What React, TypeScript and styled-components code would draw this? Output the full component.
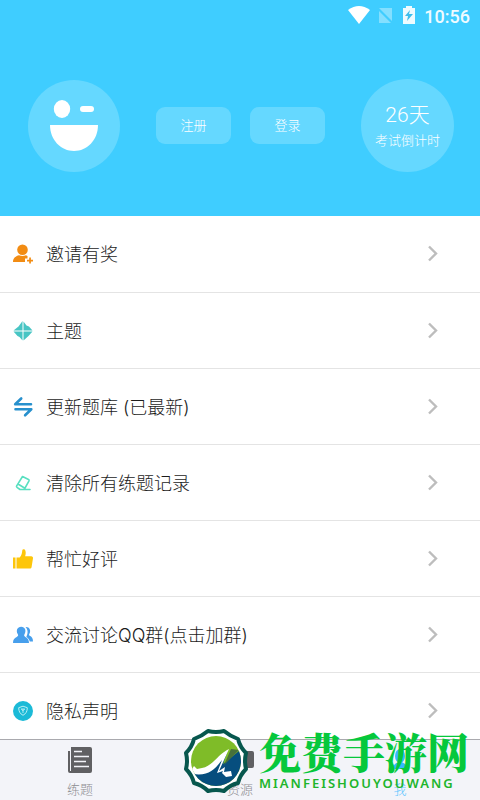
import React from "react";
import styled, { createGlobalStyle } from "styled-components";

const GlobalStyle = createGlobalStyle`
  *, *::before, *::after { box-sizing: border-box; }
  body {
    margin: 0;
    background: #fff;
    font-family: Roboto, "Noto Sans CJK SC", sans-serif;
  }
  button { font: inherit; border: 0; padding: 0; cursor: pointer; }
`;

const Page = styled.div`
  position: relative;
  display: flex;
  flex-direction: column;
  height: 100vh;
  overflow: hidden;
`;

const Header = styled.header`
  flex: none;
  background: #3fcdff;
  color: #fff;
  padding-bottom: 44px;
`;

const StatusBar = styled.div`
  display: flex;
  align-items: center;
  justify-content: flex-end;
  height: 32px;
  padding-right: 10px;
  font-size: 18px;
  font-weight: 500;
  color: #effbff;
`;

const StatusIcons = styled.div`
  display: flex;
  align-items: center;
  gap: 6px;
  margin-right: 6px;
  margin-bottom: 2px;
`;

const Profile = styled.div`
  display: flex;
  align-items: center;
  justify-content: space-between;
  padding: 47px 26px 0 28px;
`;

const Avatar = styled.button`
  width: 92px;
  height: 92px;
  && { border-radius: 50%; }
  background: #65d8ff;
`;

const Actions = styled.div`
  display: flex;
  gap: 19px;
`;

const PillButton = styled.button`
  && {
    width: 75px;
    height: 37px;
    border-radius: 9px;
    background: #65d8ff;
    color: #fff;
    font-size: 13px;
    line-height: 16px;
    font-weight: 300;
  }
`;

const Countdown = styled.div`
  display: flex;
  flex-direction: column;
  align-items: center;
  justify-content: center;
  width: 93px;
  height: 93px;
  padding-top: 2px;
  border-radius: 50%;
  background: #65d8ff;
  font-weight: 300;
`;

const Days = styled.strong`
  font-size: 21px;
  line-height: 28px;
  font-weight: 300;
`;

const Caption = styled.span`
  font-size: 13px;
  line-height: 24px;
`;

const Menu = styled.main`
  flex: 1;
  min-height: 0;
  overflow: hidden;
`;

const MenuRow = styled.button`
  display: flex;
  align-items: center;
  width: 100%;
  height: 76px;
  background: #fff;
  color: #1c1c1c;
  text-align: left;
  & + & { border-top: 1px solid #e4e4e4; }
  && { padding: 0 41px 0 12px; }
`;

const MenuLabel = styled.span`
  flex: 1;
  margin-left: 12px;
  padding-top: 2px;
  font-family: Inter, "Noto Sans CJK SC", sans-serif;
  font-size: 18px;
  line-height: 26px;
  font-weight: 300;
`;

const TabBar = styled.nav`
  flex: none;
  display: grid;
  grid-template-columns: repeat(3, 1fr);
  height: 61px;
  background: #f3f4f9;
  border-top: 1px solid #a9a9ae;
`;

const Tab = styled.button<{ $active?: boolean }>`
  display: flex;
  flex-direction: column;
  align-items: center;
  gap: 6px;
  && { padding-top: 6px; }
  background: transparent;
  color: ${(p) => (p.$active ? "#5cc4ff" : "#8e8e92")};
`;

const TabLabel = styled.span`
  font-size: 13px;
  line-height: 20px;
  font-weight: 300;
`;

const Watermark = styled.div`
  position: absolute;
  right: 11px;
  bottom: 6px;
  display: flex;
  align-items: center;
  gap: 10px;
  pointer-events: none;
`;

const Wordmark = styled.div`
  display: flex;
  flex-direction: column;
`;

const BrandName = styled.span`
  color: #06c83c;
  font-family: "Noto Serif CJK SC", "Noto Sans CJK SC", serif;
  font-size: 42px;
  line-height: 44px;
  font-weight: 900;
  white-space: nowrap;
`;

const BrandLatin = styled.span`
  color: #20b52c;
  font-family: "Noto Sans", sans-serif;
  font-size: 13px;
  line-height: 20px;
  font-weight: 600;
  letter-spacing: 2px;
`;

const InviteIcon = () => (
  <svg width="22" height="22" viewBox="0 0 22 22" fill="#f28c13">
    <circle cx="10.5" cy="6.8" r="5.3" />
    <path d="M1 19c0-4 3-6 6-6.700 2.300 1 4.800 1 7 0l1.500.7v2.500H13V19z" />
    <path d="M17.200 14.500h1.700v2.200H21v1.700h-2.100v2.200h-1.700v-2.200h-2.200v-1.700h2.200z" />
  </svg>
);

const ThemeIcon = () => (
  <svg width="22" height="22" viewBox="0 0 22 22" fill="#48c5c4">
    <path d="M10.500 1v9.500H1.500L6.500 6.500zM11.500 1.500l3 4 2.500 1 3.500 4h-9zM1.500 11.500h9v9l-3-3.500-2-1zM20.500 11.500h-9v9l5-4.500z" />
  </svg>
);

const UpdateIcon = () => (
  <svg width="22" height="22" viewBox="0 0 22 22" fill="none" stroke="#2790cd" strokeWidth="2.600" strokeLinecap="round" strokeLinejoin="round">
    <path d="M9.200 2.500 3.200 8.300H19M3.500 13.300h15.800l-6.200 6" />
  </svg>
);

const EraserIcon = () => (
  <svg width="22" height="22" viewBox="0 0 22 22" fill="none" stroke="#58dfc0" strokeWidth="1.600" strokeLinejoin="round" strokeLinecap="round">
    <path d="m10.500 4.500 6 3c.6.300.8.800.5 1.400l-4.800 8.600H8l-3-2.200c-.6-.4-.7-.9-.3-1.500zM6 12l6.500 4M8 17.500h10" />
  </svg>
);

const ThumbIcon = () => (
  <svg width="22" height="22" viewBox="0 0 22 22" fill="#fdc60b">
    <path d="M1 9.500h2.500v11H1zM4.500 9.500h3.200C9.800 7.500 10 5 10.300 2.300c.2-1.500 2.500-1.300 3.100.4.600 1.800.3 3.800-.3 5.500h6.200c1.200 0 1.900 1 1.700 2.100L19.600 19c-.2 1-.8 1.500-1.800 1.500H4.500z" />
  </svg>
);

const GroupIcon = () => (
  <svg width="22" height="22" viewBox="0 0 22 22" fill="#479fec">
    <path d="M13.500 3c3.800-.5 5.800 3.300 4 6.500-.5 1-.8 1.800.2 2.300 2 .9 3.300 2.400 3.300 5.700h-3.200c-.6-2.400-2-3.600-3.500-4.600 1.800-3.500 1.900-7-.8-9.900z" />
    <path d="M9.200 2.700c3.900 0 5.300 3.800 3.400 7.300-.8 1.500-.5 2.200.8 2.900 2.300 1.100 3.600 2.800 3.600 6.100H1c0-3.400 1.200-5 3.700-6.100 1.400-.7 1.900-1.400 1-2.900-1.900-3.400-.4-7.300 3.500-7.300z" />
  </svg>
);

const PrivacyIcon = () => (
  <svg width="22" height="22" viewBox="0 0 22 22" fill="none">
    <circle cx="11" cy="11" r="10" fill="#1bbad7" />
    <path d="m11 6.200 4.300 1.500c0 3.700-1.300 6-4.300 7.600-3-1.600-4.300-3.900-4.300-7.600z" stroke="#b9eff5" strokeWidth="1" />
    <path d="M9.200 9h3.600L11 10.800zM11 9v4" stroke="#b9eff5" strokeWidth=".9" />
  </svg>
);

const Chevron = () => (
  <svg width="12" height="18" viewBox="0 0 12 18" fill="none" stroke="#bdbdbd" strokeWidth="2.400">
    <path d="m2 1.500 7 7-7 7" />
  </svg>
);

const WinkFace = () => (
  <svg width="92" height="92" viewBox="0 0 92 92" fill="#fff" display="block">
    <ellipse cx="34" cy="29" rx="8.200" ry="9" />
    <rect x="52" y="26" width="14" height="6" rx="3" />
    <path d="M22 45h48c0 15-11 26-24 26S22 60 22 45z" />
  </svg>
);

const ExerciseIcon = () => (
  <svg width="26" height="28" viewBox="0 0 26 28">
    <path d="M5 1h18q2 0 2 2v22q0 2-2 2H3q-2 0-2-2V5h2v20h1V1z" fill="#606063" />
    <path d="M7 5.500h8M7 10.500h15M7 15.500h12M7 20.500h15" stroke="#f3f4f9" strokeWidth="1.400" />
  </svg>
);

const ResourceIcon = () => (
  <svg width="28" height="28" viewBox="0 0 28 28">
    <path d="M2 4h9l3 1h12q2 0 2 2v13q0 2-2 2H2q-2 0-2-2V6q0-2 2-2z" fill="#606063" />
  </svg>
);

const MeIcon = () => (
  <svg width="26" height="28" viewBox="0 0 26 28" fill="#36b9ff">
    <ellipse cx="13" cy="10" rx="5" ry="7" />
    <path d="M6 23c0-4 3-7 7-7s7 3 7 7z" />
  </svg>
);

const BrandLogo = () => (
  <svg width="66" height="66" viewBox="0 0 66 66">
    <defs>
      <clipPath id="brand-disc">
        <circle cx="33" cy="33" r="25" />
      </clipPath>
    </defs>
    <path
      d="M25 3q8 2 16 0 6 5 14 8 2 8 8 14-2 8 0 16-6 6-8 14-8 2-14 8-8-2-16 0-6-6-14-8-2-8-8-14 2-8 0-16 6-6 8-14 8-3 14-8z"
      fill="#fff" stroke="#07574e" strokeWidth="4" strokeLinejoin="round"
    />
    <g clipPath="url(#brand-disc)">
      <path d="M0 0h66v66H0z" fill="#7fbc28" />
      <path d="M5 45c16 2 24-2 31-12l9-11-5 14 16-13 10 4v39H5z" fill="#064e7e" />
      <path d="m46 21-10 22 6-4-1 5 7-1 1 5-6 1-4-4 1-2-6 2 5-13c-8 10-13 16-29 14l-6-6 5 1 2-3 3 3 5-1c11-2 16-14 27-19z" fill="#fff" />
      <path d="m48 21-7 16 15-15z" fill="#48713b" />
    </g>
  </svg>
);

const items = [
  { label: "邀请有奖", Icon: InviteIcon },
  { label: "主题", Icon: ThemeIcon },
  { label: "更新题库 (已最新)", Icon: UpdateIcon },
  { label: "清除所有练题记录", Icon: EraserIcon },
  { label: "帮忙好评", Icon: ThumbIcon },
  { label: "交流讨论QQ群(点击加群)", Icon: GroupIcon },
  { label: "隐私声明", Icon: PrivacyIcon },
];

const tabs = [
  { label: "练题", Icon: ExerciseIcon },
  { label: "资源", Icon: ResourceIcon },
  { label: "我", Icon: MeIcon, active: true },
];

export default function App() {
  return (
    <Page>
      <GlobalStyle />
      <Header>
        <StatusBar>
          <StatusIcons>
            <svg width="22" height="18" viewBox="0 0 22 18" fill="#fff">
              <path d="M0 4Q11-4 22 4L11 18z" />
            </svg>
            <svg width="18" height="17" viewBox="0 0 18 17" fill="#83dfff">
              <path d="M6 1h10v13L3 1zM3 4l12 12H3z" />
            </svg>
            <svg width="18" height="20" viewBox="0 0 18 20">
              <path d="M3 3h3V1h6v2h3v16H3z" fill="#effbff" />
              <path d="m10 5-5 6h3l-1 5 6-7H9z" fill="#3fbdeb" />
            </svg>
          </StatusIcons>
          <time>10:56</time>
        </StatusBar>
        <Profile>
          <Avatar aria-label="头像"><WinkFace /></Avatar>
          <Actions>
            <PillButton>注册</PillButton>
            <PillButton>登录</PillButton>
          </Actions>
          <Countdown>
            <Days>26天</Days>
            <Caption>考试倒计时</Caption>
          </Countdown>
        </Profile>
      </Header>
      <Menu>
        {items.map(({ label, Icon }) => (
          <MenuRow key={label}>
            <Icon />
            <MenuLabel>{label}</MenuLabel>
            <Chevron />
          </MenuRow>
        ))}
      </Menu>
      <TabBar>
        {tabs.map(({ label, Icon, active }) => (
          <Tab key={label} $active={active} aria-current={active ? "page" : undefined}>
            <Icon />
            <TabLabel>{label}</TabLabel>
          </Tab>
        ))}
      </TabBar>
      <Watermark>
        <BrandLogo />
        <Wordmark>
          <BrandName>免费手游网</BrandName>
          <BrandLatin>MIANFEISHOUYOUWANG</BrandLatin>
        </Wordmark>
      </Watermark>
    </Page>
  );
}
